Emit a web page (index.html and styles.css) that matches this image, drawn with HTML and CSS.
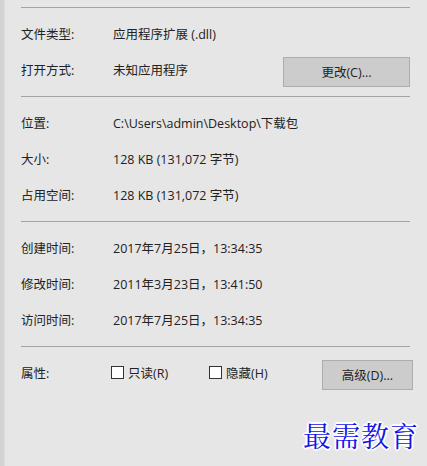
FILE: index.html
```html
<!DOCTYPE html>
<html lang="zh-CN">
<head>
  <meta charset="UTF-8" />
  <meta name="viewport" content="width=device-width, initial-scale=1.0" />
  <title>属性 - 常规</title>
  <link rel="stylesheet" href="styles.css">
</head>
<body>
  <div class="panel">
    <div class="section top"></div>

    <div class="section">
      <div class="row">
        <span class="label">文件类型:</span>
        <span class="value">应用程序扩展 (.dll)</span>
      </div>
      <div class="row">
        <span class="label">打开方式:</span>
        <span class="value">未知应用程序</span>
        <button class="btn btn-change">更改(C)...</button>
      </div>
    </div>

    <div class="section">
      <div class="row">
        <span class="label">位置:</span>
        <span class="value">C:\Users\admin\Desktop\下载包</span>
      </div>
      <div class="row">
        <span class="label">大小:</span>
        <span class="value">128 KB (131,072 字节)</span>
      </div>
      <div class="row">
        <span class="label">占用空间:</span>
        <span class="value">128 KB (131,072 字节)</span>
      </div>
    </div>

    <div class="section">
      <div class="row">
        <span class="label">创建时间:</span>
        <span class="value">2017年7月25日，13:34:35</span>
      </div>
      <div class="row">
        <span class="label">修改时间:</span>
        <span class="value">2011年3月23日，13:41:50</span>
      </div>
      <div class="row">
        <span class="label">访问时间:</span>
        <span class="value">2017年7月25日，13:34:35</span>
      </div>
    </div>

    <div class="section last">
      <div class="row">
        <span class="label">属性:</span>
        <label class="check check-ro"><span class="box"></span>只读(R)</label>
        <label class="check"><span class="box"></span>隐藏(H)</label>
        <button class="btn btn-adv">高级(D)...</button>
      </div>
    </div>
  </div>

  <div class="mark">最需教育</div>
</body>
</html>
```

FILE: styles.css
```css
body {
  margin: 0;
  height: 466px;
  background: #e6e6e6;
  font-family: "Microsoft YaHei", "Open Sans", "Noto Sans CJK SC", sans-serif;
  font-size: 12.5px;
  color: #222222;
  border-left: 4px solid #d3d3d3;
  box-shadow: inset 1px 0 0 #dddddd;
  position: relative;
  overflow: hidden;
}
.panel {
  padding: 0 17px 0 17px;
}
.section {
  border-bottom: 1px solid #a3a3a3;
  padding: 7px 0 9px;
}
.section.top {
  height: 7px;
  padding: 0;
}
.section.last {
  border-bottom: none;
}
.row {
  display: flex;
  align-items: center;
  min-height: 36px;
}
.label {
  width: 92px;
  flex-shrink: 0;
}
.value {
  flex: 1;
}
.btn {
  font-family: inherit;
  font-size: 12.5px;
  color: #222222;
  background: #cccccc;
  border: 1px solid #adadad;
  height: 30px;
  padding: 0;
  margin-top: 5px;
}
.btn-change {
  width: 127px;
}
.btn-adv {
  width: 91px;
  margin-left: auto;
  margin-right: -3px;
}
.check {
  display: flex;
  align-items: center;
  gap: 4px;
}
.check-ro {
  margin-left: -2px;
  width: 98px;
}
.box {
  width: 11px;
  height: 11px;
  border: 1px solid #333333;
  background: #ffffff;
}
.mark {
  position: absolute;
  right: 8px;
  top: 415px;
  font-family: "Noto Serif CJK SC", "Noto Sans CJK SC", serif;
  font-size: 28px;
  letter-spacing: 1px;
  color: #1414e6;
  text-shadow: 1px 1px 0 #fff, -1px -1px 0 #fff, 1px -1px 0 #fff, -1px 1px 0 #fff,
    2px 0 0 #fff, -2px 0 0 #fff, 0 2px 0 #fff, 0 -2px 0 #fff;
}
```
